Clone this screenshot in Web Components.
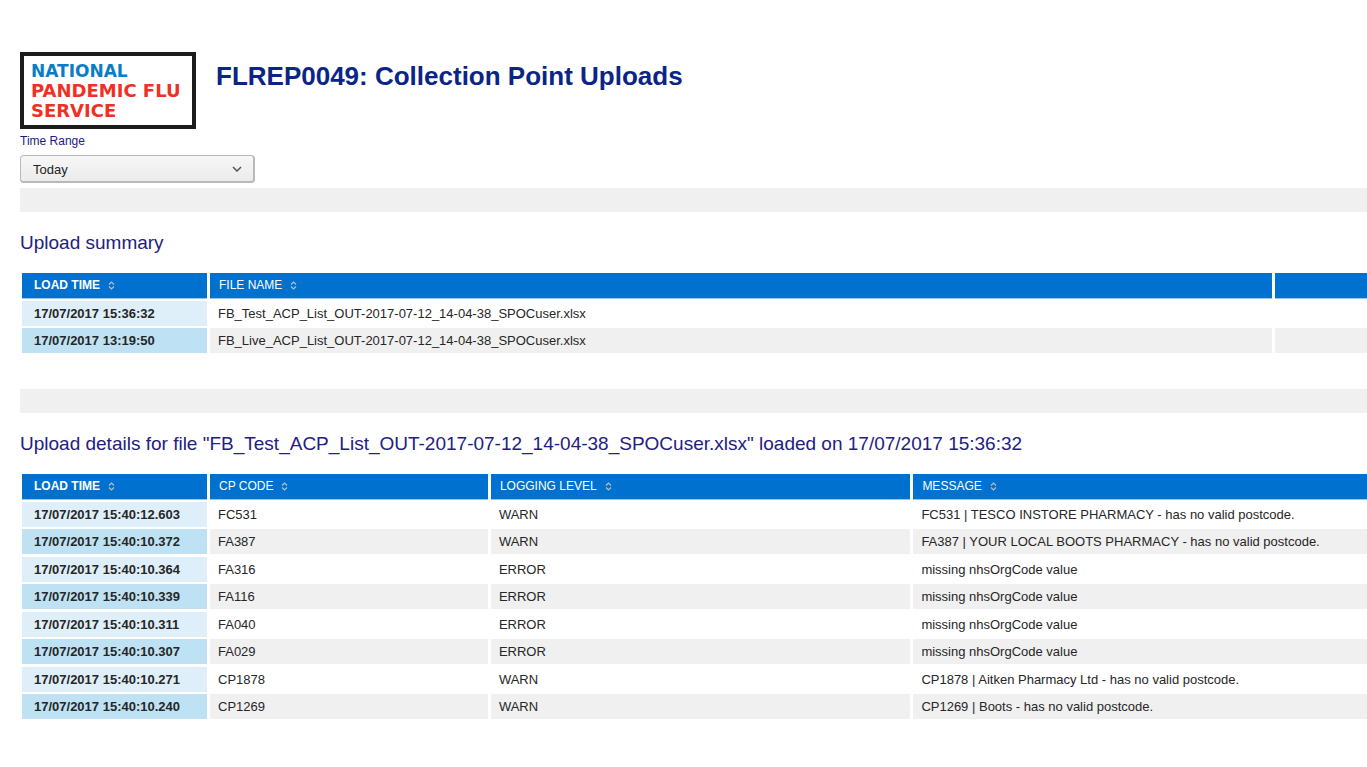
<!DOCTYPE html>
<html lang="en">
<head>
<meta charset="utf-8">
<title>FLREP0049: Collection Point Uploads</title>
<style>
  body { margin: 0; background: #fff; font-family: "Liberation Sans", Arial, sans-serif; color: #222; }
</style>
</head>
<body>
<report-page></report-page>

<template id="t-logo">
  <style>
    :host { display: block; box-sizing: border-box; width: 176px; height: 77px; border: 4px solid #1d1b1c; padding: 5px 0 0 7px;
            font-family: "DejaVu Sans", sans-serif; font-weight: 700; font-size: 18px; line-height: 20px; white-space: nowrap; color: #ee3124; }
    p { margin: 0; }
    .blue { font-size: 17px; color: #0b7dc6; }
  </style>
  <p><span class="blue">NATIONAL</span><br>PANDEMIC FLU<br>SERVICE</p>
</template>

<template id="t-select">
  <style>
    :host { display: block; width: 235px; }
    label { display: block; font-size: 12px; line-height: 16px; color: #1d1a80; padding: 4px 0 6px; }
    .box { display: grid; align-items: center; }
    .box > * { grid-area: 1 / 1; }
    select { appearance: none; box-sizing: border-box; width: 100%; height: 28px; margin: 0; padding: 2px 30px 0 12px;
             font: 13px "Liberation Sans", Arial, sans-serif; color: #222; border: 1px solid #b9b9b9; border-right-width: 2px; border-bottom-width: 2px; border-radius: 4px;
             background: linear-gradient(#f7f7f7, #ebebeb); }
    svg { justify-self: end; margin-right: 13px; pointer-events: none; }
  </style>
  <label for="range">Time Range</label>
  <div class="box">
    <select id="range"><option>Today</option></select>
    <svg width="10" height="6" viewBox="0 0 10 6" fill="none" stroke="#555" stroke-width="1.5"><path d="M1 1l4 4 4-4"/></svg>
  </div>
</template>

<template id="t-section">
  <style>
    :host { display: block; }
    .bar { height: 24px; background: #f0f0f0; }
    h2 { margin: 0; padding: 20px 0 17px; font-size: 19px; line-height: 22px; font-weight: 400; color: #23207f; white-space: nowrap; }
  </style>
  <div class="bar"></div>
  <h2></h2>
  <slot></slot>
</template>

<template id="t-table">
  <style>
    :host { display: block; overflow: hidden; margin-left: -1px; }
    table { table-layout: fixed; width: calc(100% + 3px); border-collapse: separate; border-spacing: 3px 2px; font-size: 13px; line-height: 15px; }
    th, td { box-sizing: border-box; height: 25px; padding: 0 8px; text-align: left; white-space: nowrap; vertical-align: middle; font-weight: 400; color: #262626; }
    thead th { height: 26px; background: #0071ce; color: #fff; padding: 0 9px; border-bottom: 1px solid #9cc5ea; }
    th:first-child { width: 185px; padding-left: 12px; font-weight: 700; }
    thead th { font-size: 12px; }
    tbody th { background: #dfeff9; }
    tbody tr:nth-child(even) > * { height: 26px; border-bottom: 1px solid #fff; background: #f0f0f0; background-clip: padding-box; }
    tbody tr:nth-child(even) th { background-color: #bee2f4; }
    svg { margin-left: 8px; vertical-align: -1px; }
  </style>
  <table><thead><tr></tr></thead><tbody></tbody></table>
</template>

<template id="t-page">
  <style>
    :host { display: block; padding: 52px 0 40px 20px; overflow: hidden; }
    header { display: flex; align-items: flex-start; gap: 20px; }
    h1 { margin: 0; padding-top: 9px; font-size: 26px; line-height: 30px; color: #0a2587; white-space: nowrap; }
    time-select { margin-bottom: 5px; }
    report-section + report-section { margin-top: 33px; }
  </style>
  <header><flu-logo></flu-logo><h1>FLREP0049: Collection Point Uploads</h1></header>
  <time-select></time-select>
  <report-section heading="Upload summary"><data-table id="summary"></data-table></report-section>
  <report-section heading='Upload details for file "FB_Test_ACP_List_OUT-2017-07-12_14-04-38_SPOCuser.xlsx" loaded on 17/07/2017 15:36:32'><data-table id="details"></data-table></report-section>
</template>

<script>
  class Base extends HTMLElement {
    constructor() {
      super();
      this.attachShadow({ mode: "open" }).append(document.getElementById(this.constructor.tpl).content.cloneNode(true));
    }
  }
  class FluLogo extends Base { static tpl = "t-logo"; }
  class TimeSelect extends Base { static tpl = "t-select"; }
  class ReportSection extends Base {
    static tpl = "t-section";
    connectedCallback() { this.shadowRoot.querySelector("h2").textContent = this.getAttribute("heading"); }
  }
  class DataTable extends Base {
    static tpl = "t-table";
    set data({ columns, rows }) {
      const root = this.shadowRoot;
      const icon = '<svg width="7" height="9" viewBox="0 0 7 9" fill="none" stroke="#b9bec4" stroke-width="1.2"><path d="M1 3.5L3.5 1 6 3.5M1 5.5L3.5 8 6 5.5"/></svg>';
      root.querySelector("thead tr").innerHTML = columns.map(([name, width]) =>
        `<th scope="col"${width ? ` style="width:${width}"` : ""}>${name ? name + icon : ""}</th>`).join("");
      root.querySelector("tbody").innerHTML = rows.map(([first, ...rest]) =>
        `<tr><th scope="row">${first}</th>${rest.map(c => `<td>${c}</td>`).join("")}</tr>`).join("");
    }
  }
  class ReportPage extends Base {
    static tpl = "t-page";
    connectedCallback() {
      const $ = id => this.shadowRoot.getElementById(id);
      $("summary").data = {
        columns: [["LOAD TIME"], ["FILE NAME", "79.3%"], [""]],
        rows: [
          ["17/07/2017 15:36:32", "FB_Test_ACP_List_OUT-2017-07-12_14-04-38_SPOCuser.xlsx", ""],
          ["17/07/2017 13:19:50", "FB_Live_ACP_List_OUT-2017-07-12_14-04-38_SPOCuser.xlsx", ""]
        ]
      };
      const missing = "missing nhsOrgCode value";
      $("details").data = {
        columns: [["LOAD TIME"], ["CP CODE", "20.8%"], ["LOGGING LEVEL", "31.4%"], ["MESSAGE"]],
        rows: [
          ["17/07/2017 15:40:12.603", "FC531", "WARN", "FC531 | TESCO INSTORE PHARMACY - has no valid postcode."],
          ["17/07/2017 15:40:10.372", "FA387", "WARN", "FA387 | YOUR LOCAL BOOTS PHARMACY - has no valid postcode."],
          ["17/07/2017 15:40:10.364", "FA316", "ERROR", missing],
          ["17/07/2017 15:40:10.339", "FA116", "ERROR", missing],
          ["17/07/2017 15:40:10.311", "FA040", "ERROR", missing],
          ["17/07/2017 15:40:10.307", "FA029", "ERROR", missing],
          ["17/07/2017 15:40:10.271", "CP1878", "WARN", "CP1878 | Aitken Pharmacy Ltd - has no valid postcode."],
          ["17/07/2017 15:40:10.240", "CP1269", "WARN", "CP1269 | Boots - has no valid postcode."]
        ]
      };
    }
  }
  customElements.define("flu-logo", FluLogo);
  customElements.define("time-select", TimeSelect);
  customElements.define("report-section", ReportSection);
  customElements.define("data-table", DataTable);
  customElements.define("report-page", ReportPage);
</script>
</body>
</html>
